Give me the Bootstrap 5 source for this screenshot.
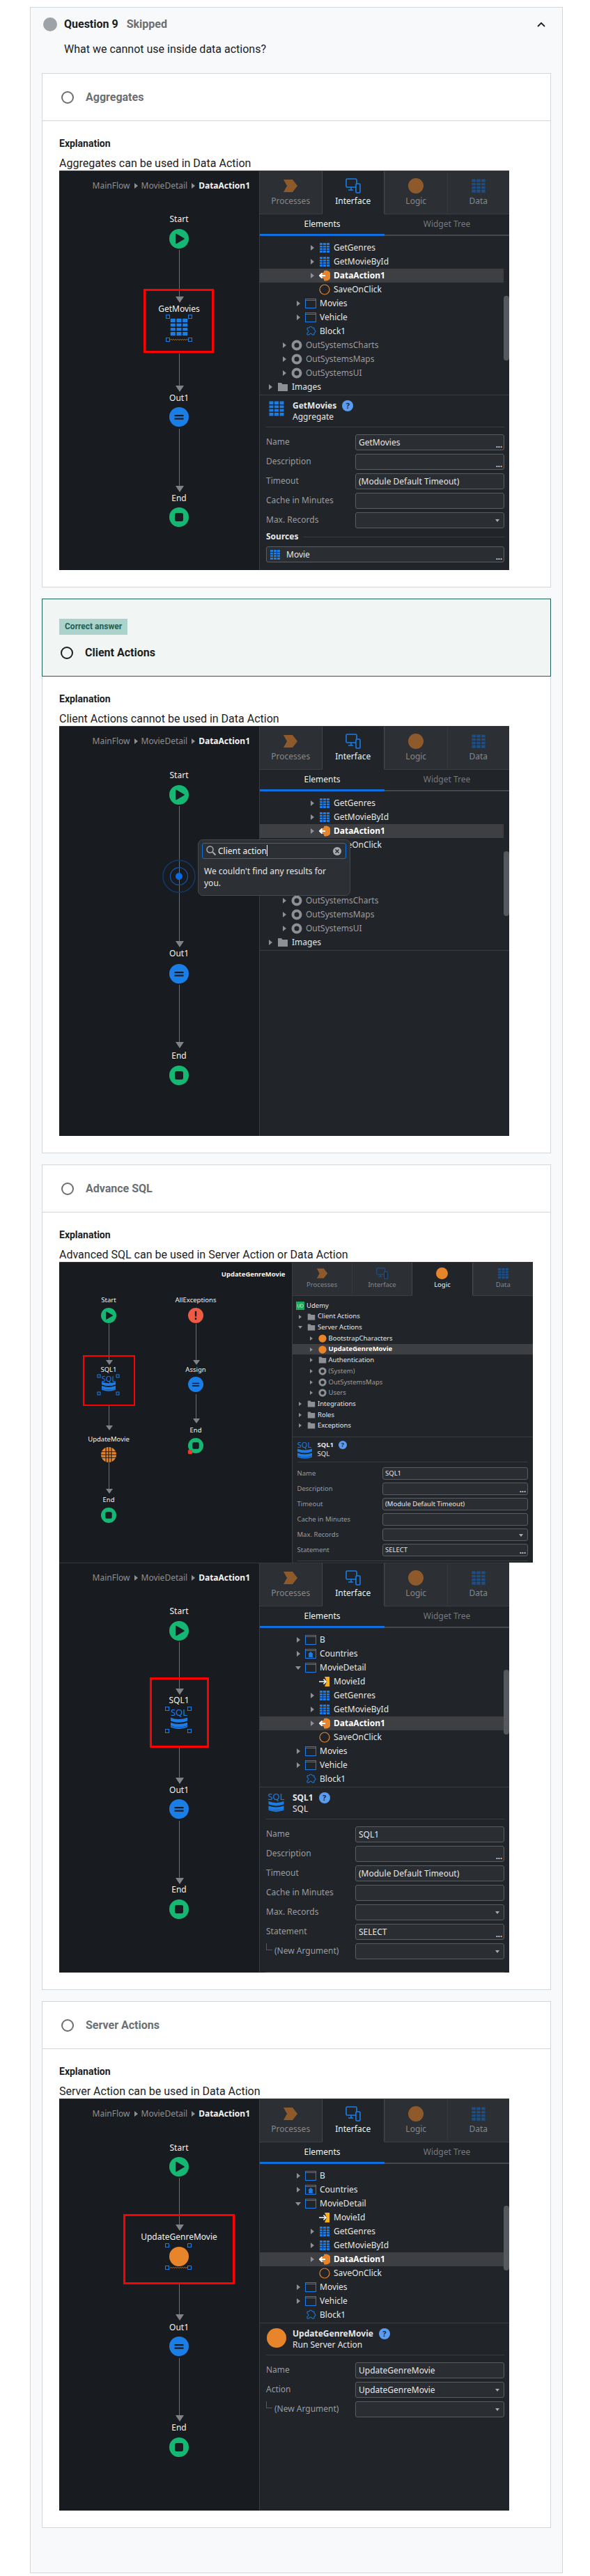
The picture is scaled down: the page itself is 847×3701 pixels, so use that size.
<!DOCTYPE html>
<html lang="en">
<head>
    <meta charset="UTF-8">
    <meta name="viewport" content="width=device-width, initial-scale=1.0">
    <title>Question 9</title>
    <link href="https://cdn.jsdelivr.net/npm/bootstrap@5.3.0/dist/css/bootstrap.min.css" rel="stylesheet">
    <style>
        body { background: #fff; color: #1c1d1f; font-family: Roboto, "Liberation Sans", sans-serif; font-size: 16px; margin: 0; }
        .quiz-panel { margin: 10px 39px 0 43px; background: #f7f9fa; border: 1px solid #d1d7dc; padding: 14px 16px 64px; }
        .quiz-dot { width: 20px; height: 20px; border-radius: 50%; background: #9da3a7; margin: 0 10px 0 2px; }
        .quiz-head { height: 20px; line-height: 20px; font-weight: 700; }
        .quiz-skip { color: #6a6f73; margin-left: 12px; }
        .quiz-text { margin: 14px 0 22px 32px; line-height: 24px; }
        .quiz-answer { background: #fff; border: 1px solid #d1d7dc; margin-bottom: 16px; }
        .quiz-title { height: 68px; padding: 0 24px 0 25px; font-weight: 700; color: #6a6f73; border-bottom: 1px solid #d1d7dc; }
        .quiz-radio { width: 18px; height: 18px; border: 2px solid #6a6f73; border-radius: 50%; margin: 0 17px 0 2px; flex: none; }
        .quiz-correct .quiz-title { height: auto; display: block !important; padding: 26px 24px 21px; background: #f1f5f3; color: #1c1d1f; border: 1px solid #1e6055; margin: -1px -1px 0; }
        .quiz-correct .quiz-radio { border-color: #1c1d1f; }
        .quiz-badge { display: inline-block; height: 23px; line-height: 23px; padding: 0 8px; background: #acd2cc; color: #1e6055; font-size: 12px; font-weight: 700; margin-bottom: 14px; }
        .quiz-body { padding: 22px 24px 24px; }
        .quiz-expl { font-size: 14px; font-weight: 700; line-height: 21px; margin-bottom: 8px; }
        .quiz-note { line-height: 20px; }

        .ide { --row: 20px; --fs: 12px; --tabh: 63px; --tab-icon: 22px; --cw: 288px; position: relative; width: 646px; display: flex; background: #181b20; font-family: "Noto Sans", "Liberation Sans", sans-serif; font-size: var(--fs); color: #e6e7e8; overflow: hidden; }
        .ide::before { content: ""; position: absolute; left: 0; right: 0; top: 0; height: 1px; background: #34373b; z-index: 4; }
        .ide-sm { --row: 15.7px; --fs: 9.5px; --tabh: 49px; --tab-icon: 17px; --cw: 334.5px; width: 680px; }
        .ide-canvas { position: relative; width: var(--cw); flex: none; background: #181b20; border-right: 1px solid #3a3d41; }
        .ide-crumb { height: 42px; padding: 13px 13px 0 0; line-height: 18px; color: #8d9094; }
        .ide-crumb b { color: #f2f2f2; }
        .ide-sm .ide-crumb { padding: 9px 9px 0 0; }
        .ide-sep { width: 0; height: 0; border-left: 5px solid #8d9094; border-top: 4px solid transparent; border-bottom: 4px solid transparent; margin: 5px 5px 0 6px; }
        .ide-panel { flex: 1 1 0; min-width: 0; background: #212428; display: flex; flex-direction: column; }
        .ide-tab { flex: 1 1 0; height: var(--tabh); background: #2c2f33; border-bottom: 1px solid #3a3d41; border-left: 1px solid #34373b; color: #85888c; text-align: center; }
        .ide-tab:first-child { border-left: 0; }
        .ide-tab svg { display: block; width: var(--tab-icon); height: var(--tab-icon); margin: 11px auto 2px; }
        .ide-sm .ide-tab svg { margin: 8px auto 1px; }
        .ide-tab-on { background: #212428; color: #f2f2f2; border-bottom-color: #212428; border-left: 1px solid #45484c; border-right: 1px solid #45484c; }
        .ide-sub { height: 31px; line-height: 28px; text-align: center; color: #77797d; border-bottom: 2px solid #45484c; }
        .ide-sub > div { flex: 1 1 0; height: 31px; }
        .ide-sub-on { color: #f2f2f2; border-bottom: 3px solid #0d6fe0; }
        .ide-tree { position: relative; height: 229px; padding-top: 7px; flex: none; border-bottom: 1px solid #3a3d41; }
        .ide-sm .ide-tree { height: 203px; padding-top: 6px; }
        .ide-line { height: var(--row); padding-right: 8px; white-space: nowrap; margin-right: 8px; }
        .ide-sm .ide-line { margin-right: 0; }
        .ide-line-on { background: #3d3f43; font-weight: 700; color: #fff; }
        .ide-dim { color: #9a9da0; }
        .ide-arrow { width: 8px; margin-right: 6px; flex: none; display: flex; justify-content: center; }
        .ide-sm .ide-arrow { width: 6px; margin-right: 7px; }
        .ide-arrow i { display: block; width: 0; height: 0; }
        .ide-ar { border-left: 5px solid #8d9094; border-top: 4px solid transparent; border-bottom: 4px solid transparent; }
        .ide-ad { border-top: 5px solid #8d9094; border-left: 4px solid transparent; border-right: 4px solid transparent; }
        .ide-sm .ide-ar { border-left-width: 4px; border-top-width: 3px; border-bottom-width: 3px; }
        .ide-sm .ide-ad { border-top-width: 4px; border-left-width: 3px; border-right-width: 3px; }
        .ide-ico { width: 16px; height: 16px; margin-right: 5px; flex: none; color: #1a7ee6; }
        .ide-sm .ide-ico { width: 12px; height: 12px; margin-right: 3px; }
        .ide-scroll { position: absolute; right: 0; width: 8px; background: #55585c; border-radius: 4px; }
        .ide-detail { padding: 0 7px 0 9px; }
        .ide-sm .ide-detail { padding: 0 7px; }
        .ide-hdr { height: 46px; padding-top: 7px; line-height: 16px; border-bottom: 1px solid #3a3d41; }
        .ide-sm .ide-hdr { height: 36px; padding-top: 5px; line-height: 12.6px; }
        .ide-hdr-ico { width: 29px; margin-right: 9px; flex: none; color: #1a7ee6; text-align: center; }
        .ide-sm .ide-hdr-ico { width: 21px; margin-right: 8px; }
        .ide-hdr-sql { font-size: 13px; line-height: 13px; display: block; }
        .ide-sm .ide-hdr-sql { font-size: 11px; line-height: 11px; }
        .ide-help { display: inline-block; width: 16px; height: 16px; line-height: 16px; border-radius: 50%; background: #5b9bf0; color: #1d2a3d; font-size: 11px; font-weight: 700; text-align: center; margin-left: 8px; }
        .ide-sm .ide-help { width: 12px; height: 12px; line-height: 12px; font-size: 9px; margin-left: 7px; }
        .ide-form { padding-top: 7px; }
        .ide-sm .ide-form { padding-top: 5px; }
        .ide-field { display: grid; grid-template-columns: 128px 1fr; height: 28px; align-items: center; color: #9a9da0; }
        .ide-sm .ide-field { grid-template-columns: 122.5px 1fr; height: 22px; }
        .ide-input { position: relative; height: 23px; line-height: 21px; padding-left: 4px; background: #2a2d31; border: 1px solid #5a5d61; border-radius: 3px; color: #e6e7e8; white-space: nowrap; }
        .ide-sm .ide-input { height: 18px; line-height: 16px; padding-left: 3px; }
        .ide-dots { position: absolute; right: 2px; bottom: 1px; line-height: 12px; font-size: 11px; font-weight: 700; }
        .ide-caret { position: absolute; right: 6px; top: 9px; width: 0; height: 0; border-top: 4px solid #a9abae; border-left: 3px solid transparent; border-right: 3px solid transparent; }
        .ide-sm .ide-caret { top: 7px; }
        .ide-arg { padding-left: 12px; position: relative; }
        .ide-arg::before { content: ""; position: absolute; left: 0; top: -2px; width: 9px; height: 10px; border-left: 1px solid #55585c; border-bottom: 1px solid #55585c; }
        .ide-sources { height: 20px; line-height: 20px; font-weight: 700; color: #e6e7e8; }
        .ide-sources::after { content: ""; flex: 1; height: 1px; background: #3a3d41; margin-left: 8px; }
        .ide-end { border-bottom: 1px solid #3a3d41; }

        .node-label { position: absolute; transform: translate(-50%, -50%); line-height: 16px; color: #f2f2f2; white-space: nowrap; }
        .node-wire { position: absolute; width: 1px; background: #6d7073; }
        .node-head { position: absolute; width: 0; height: 0; border-top: 9px solid #808285; border-left: 6.5px solid transparent; border-right: 6.5px solid transparent; transform: translateX(-50%); }
        .ide-sm .node-head { border-top-width: 7px; border-left-width: 5px; border-right-width: 5px; }
        .node-pic { position: absolute; transform: translate(-50%, -50%); display: block; color: #1a7ee6; }
        .node-pick { position: absolute; border: 3px solid #f00; }
        .ide-sm .node-pick { border-width: 2px; }
        .node-sql { position: absolute; transform: translate(-50%, -50%); color: #1a7ee6; line-height: 14px; font-size: 13px; }
        .ide-sm .node-sql { font-size: 11px; }
        .node-dot { position: absolute; width: 6px; height: 6px; background: #181b20; border: 1px solid #1a7ee6; transform: translate(-50%, -50%); }
        .ide-sm .node-dot { width: 5px; height: 5px; }

        .find-pop { position: absolute; left: 199px; top: 163px; width: 219px; height: 81px; background: #2c3034; border: 1px solid #45484c; border-radius: 7px; padding: 4px 5px; z-index: 3; }
        .find-box { height: 23px; border: 1px solid #0d6fe0; border-radius: 3px; padding-left: 22px; line-height: 21px; position: relative; color: #f2f2f2; }
        .find-box svg { position: absolute; }
        .find-cur { display: inline-block; width: 1px; height: 16px; background: #fff; vertical-align: -3px; }
        .find-msg { padding: 9px 3px 0 3px; line-height: 17px; color: #e6e7e8; }
    </style>
</head>
<body>
    <svg width="0" height="0" class="position-absolute">
        <symbol id="i-proc" viewBox="0 0 22 22"><polygon points="1,2 14,2 21,11 14,20 1,20 6,11" fill="currentColor"/></symbol>
        <symbol id="i-iface" viewBox="0 0 22 22" fill="none" stroke="currentColor" stroke-width="1.6"><rect x="1" y="1" width="15" height="12" rx="1.5"/><path d="M4 17h7M8 13v4"/><rect x="15" y="8" width="6" height="13" rx="1.2" fill="#212428"/></symbol>
        <symbol id="i-logic" viewBox="0 0 22 22"><circle cx="11" cy="11" r="11" fill="currentColor"/></symbol>
        <symbol id="i-grid" viewBox="0 0 16 16"><path fill="currentColor" d="M1 1h4v3H1zM6 1h4v3H6zM11 1h4v3h-4zM1 5h4v2.500H1zM6 5h4v2.500H6zM11 5h4v2.500h-4zM1 8.500h4V11H1zM6 8.500h4V11H6zM11 8.500h4V11h-4zM1 12h4v3H1zM6 12h4v3H6zM11 12h4v3h-4z"/></symbol>
        <symbol id="i-act" viewBox="0 0 16 16"><path d="M7 1a7.500 7.500 0 1 1 0 14z" fill="#e8842a"/><circle cx="8" cy="8" r="5" fill="#e8842a"/><path d="M1 8h8M4.500 4.500 1 8l3.500 3.500" stroke="#fff" stroke-width="2" fill="none"/></symbol>
        <symbol id="i-ring" viewBox="0 0 16 16"><circle cx="8" cy="8" r="7" fill="none" stroke="#e8842a" stroke-width="1.200"/></symbol>
        <symbol id="i-orange" viewBox="0 0 16 16"><circle cx="8" cy="8" r="7.500" fill="#e8842a"/></symbol>
        <symbol id="i-screen" viewBox="0 0 16 16" fill="none" stroke="#1a7ee6" stroke-width="1"><rect x=".500" y="1.500" width="15" height="13"/><path d="M.500 3.500h15"/></symbol>
        <symbol id="i-home" viewBox="0 0 16 16"><rect x=".500" y="1.500" width="15" height="13" fill="none" stroke="#1a7ee6"/><path d="M.500 3.500h15" stroke="#1a7ee6"/><path d="M8 5l4 3.500h-1.200V13H5.200V8.500H4z" fill="#1a7ee6"/></symbol>
        <symbol id="i-block" viewBox="0 0 16 16"><path d="M3 3h3a2 2 0 0 1 4 0h3v3a2 2 0 0 1 0 4v3h-3a2 2 0 0 0-4 0H3v-3a2 2 0 0 0 0-4z" fill="none" stroke="#1a7ee6"/></symbol>
        <symbol id="i-mod" viewBox="0 0 16 16"><circle cx="8" cy="8" r="5.500" fill="none" stroke="#8d9094" stroke-width="4"/></symbol>
        <symbol id="i-folder" viewBox="0 0 16 16"><path d="M1 2h5l1.500 2H15v10H1z" fill="#8d9094"/></symbol>
        <symbol id="i-input" viewBox="0 0 16 16"><path d="M8 1h7v14H8l3-7z" fill="#f5b01c"/><path d="M0 8h10M6.500 4.500 10 8l-3.500 3.500" stroke="#fff" stroke-width="1.600" fill="none"/></symbol>
        <symbol id="i-ud" viewBox="0 0 16 16"><rect width="16" height="16" fill="#1faa59"/><path d="M3 5v4a2 2 0 0 0 4 0V5M9 5v6h2a3 3 0 0 0 0-6z" fill="none" stroke="#bff0d2"/></symbol>
        <symbol id="n-start" viewBox="0 0 28 28"><circle cx="14" cy="14" r="14" fill="#14b873"/><path d="M10 7.500 21 14l-11 6.500z" fill="#181b20" stroke="#181b20" stroke-width="1.500" stroke-linejoin="round"/></symbol>
        <symbol id="n-end" viewBox="0 0 28 28"><circle cx="14" cy="14" r="14" fill="#14b873"/><rect x="8" y="8" width="12" height="12" rx="2.500" fill="#181b20"/></symbol>
        <symbol id="n-assign" viewBox="0 0 28 28"><circle cx="14" cy="14" r="14" fill="#1a7ee6"/><path d="M7.500 11h13v2.200h-13zM7.500 15.500h13v2.200h-13z" fill="#181b20"/></symbol>
        <symbol id="n-error" viewBox="0 0 28 28"><circle cx="14" cy="14" r="14" fill="#ee5a44"/><path d="M12.500 6h3v10h-3zM12.500 18h3v3.500h-3z" fill="#181b20"/></symbol>
        <symbol id="n-web" viewBox="0 0 28 28"><circle cx="14" cy="14" r="14" fill="#e8842a"/><path d="M0 8.500h28M0 14h28M0 19.500h28M9 0v28M14 0v28M19 0v28" stroke="#181b20" stroke-width="1.400"/></symbol>
        <symbol id="n-orange" viewBox="0 0 28 28"><circle cx="14" cy="14" r="14" fill="#e8842a"/></symbol>
        <symbol id="n-red" viewBox="0 0 8 8"><circle cx="4" cy="4" r="4" fill="#ee3a2c"/></symbol>
        <symbol id="n-db" viewBox="0 0 26 20"><path fill="#1a7ee6" d="M0 0q13 5 26 0v5q-13 5-26 0zM0 7.500q13 5 26 0v5q-13 5-26 0zM0 13q13 5 26 0v2q-13 5-26 0z"/></symbol>
        <symbol id="n-squig" viewBox="0 0 32 4"><path d="M0 3l2-2 2 2 2-2 2 2 2-2 2 2 2-2 2 2 2-2 2 2 2-2 2 2 2-2 2 2 2-2 2 2" fill="none" stroke="#d88a22"/></symbol>
        <symbol id="n-target" viewBox="0 0 48 48"><circle cx="24" cy="24" r="23" fill="none" stroke="#123a6b" stroke-width="1.500"/><circle cx="24" cy="24" r="12.500" fill="none" stroke="#1259b0" stroke-width="1.200"/><circle cx="24" cy="24" r="5" fill="#0a6be0"/></symbol>
    </svg>

    <div class="quiz-panel">
        <div class="d-flex align-items-center quiz-head">
            <span class="quiz-dot"></span>
            <span>Question 9</span>
            <span class="quiz-skip">Skipped</span>
            <svg class="ms-auto me-2" width="12" height="8" viewBox="0 0 12 8"><path d="M1 7l5-5 5 5" fill="none" stroke="#1c1d1f" stroke-width="1.800"/></svg>
        </div>
        <div class="quiz-text">What we cannot use inside data actions?</div>

        <div class="quiz-answer">
            <div class="quiz-title d-flex align-items-center"><span class="quiz-radio"></span>Aggregates</div>
            <div class="quiz-body">
                <div class="quiz-expl">Explanation</div>
                <div class="quiz-note">Aggregates can be used in Data Action</div>
                <div id="shot1"></div>
            </div>
        </div>

        <div class="quiz-answer quiz-correct">
            <div class="quiz-title">
                <div><span class="quiz-badge">Correct answer</span></div>
                <div class="d-flex align-items-center"><span class="quiz-radio"></span>Client Actions</div>
            </div>
            <div class="quiz-body">
                <div class="quiz-expl">Explanation</div>
                <div class="quiz-note">Client Actions cannot be used in Data Action</div>
                <div id="shot2"></div>
            </div>
        </div>

        <div class="quiz-answer">
            <div class="quiz-title d-flex align-items-center"><span class="quiz-radio"></span>Advance SQL</div>
            <div class="quiz-body">
                <div class="quiz-expl">Explanation</div>
                <div class="quiz-note">Advanced SQL can be used in Server Action or Data Action</div>
                <div id="shot3"></div>
                <div id="shot4"></div>
            </div>
        </div>

        <div class="quiz-answer mb-0">
            <div class="quiz-title d-flex align-items-center"><span class="quiz-radio"></span>Server Actions</div>
            <div class="quiz-body">
                <div class="quiz-expl">Explanation</div>
                <div class="quiz-note">Server Action can be used in Data Action</div>
                <div id="shot5"></div>
            </div>
        </div>
    </div>

    <script>
        const use = (id, cls, style) => `<svg class="${cls || ''}" ${style ? `style="${style}"` : ''}><use href="#${id}"/></svg>`;

        // tree rows: [level, arrow, icon, text, extra class]
        const treeShort = [
            [3, 'r', 'grid', 'GetGenres'], [3, 'r', 'grid', 'GetMovieById'], [3, 'r', 'act', 'DataAction1', 'on'], [3, '', 'ring', 'SaveOnClick'],
            [2, 'r', 'screen', 'Movies'], [2, 'r', 'screen', 'Vehicle'], [2, '', 'block', 'Block1'],
            [1, 'r', 'mod', 'OutSystemsCharts', 'dim'], [1, 'r', 'mod', 'OutSystemsMaps', 'dim'], [1, 'r', 'mod', 'OutSystemsUI', 'dim'],
            [0, 'r', 'folder', 'Images']
        ];
        const treeDetail = [
            [2, 'r', 'screen', 'B'], [2, 'r', 'home', 'Countries'], [2, 'd', 'screen', 'MovieDetail'],
            [3, '', 'input', 'MovieId'], [3, 'r', 'grid', 'GetGenres'], [3, 'r', 'grid', 'GetMovieById'], [3, 'r', 'act', 'DataAction1', 'on'], [3, '', 'ring', 'SaveOnClick'],
            [2, 'r', 'screen', 'Movies'], [2, 'r', 'screen', 'Vehicle'], [2, '', 'block', 'Block1']
        ];
        const treeLogic = [
            [0, 'root', 'ud', 'Udemy'],
            [1, 'r', 'folder', 'Client Actions'], [1, 'd', 'folder', 'Server Actions'],
            [2, 'r', 'orange', 'BootstrapCharacters'], [2, 'r', 'orange', 'UpdateGenreMovie', 'on'], [2, 'r', 'folder', 'Authentication'],
            [2, 'r', 'mod', '(System)', 'dim'], [2, 'r', 'mod', 'OutSystemsMaps', 'dim'], [2, 'r', 'mod', 'Users', 'dim'],
            [1, 'r', 'folder', 'Integrations'], [1, 'r', 'folder', 'Roles'], [1, 'r', 'folder', 'Exceptions']
        ];

        function treeRow(r, small) {
            const [level, arrow, icon, text, extra] = r;
            const pad = arrow === 'root' ? 5.5 : small ? -7 + 15.5 * level : 11 + 20 * level;
            const arrowHtml = arrow === 'root' ? '' : `<span class="ide-arrow"><i class="${arrow ? 'ide-a' + arrow : ''}"></i></span>`;
            const cls = extra === 'on' ? 'ide-line-on' : extra === 'dim' ? 'ide-dim' : '';
            return `<div class="ide-line d-flex align-items-center ${cls}" style="padding-left:${pad}px">${arrowHtml}${use('i-' + icon, 'ide-ico')}<span>${text}</span></div>`;
        }

        function tabs(active) {
            const list = [['Processes', 'i-proc', '#e8842a', '#8f5a2b'], ['Interface', 'i-iface', '#1a7ee6', '#1c4f85'], ['Logic', 'i-logic', '#e8842a', '#8f5a2b'], ['Data', 'i-grid', '#1a7ee6', '#1c4f85']];
            return '<div class="d-flex">' + list.map(t => {
                const on = t[0] === active;
                return `<div class="ide-tab ${on ? 'ide-tab-on' : ''}">${use(t[1], '', 'color:' + (on ? t[2] : t[3]))}${t[0]}</div>`;
            }).join('') + '</div>';
        }

        function field(f) {
            const [label, value, tail, arg] = f;
            const end = tail === 'dots' ? '<span class="ide-dots">...</span>' : tail === 'caret' ? '<span class="ide-caret"></span>' : '';
            return `<div class="ide-field"><span class="${arg ? 'ide-arg' : ''}">${label}</span><div class="ide-input">${value}${end}</div></div>`;
        }

        // flow canvas: nodes sit at their own coordinates
        function canvas(s) {
            let h = `<div class="ide-crumb d-flex justify-content-end">${s.crumb}</div>`;
            (s.wires || []).forEach(w => { h += `<div class="node-wire" style="left:${w[0]}px;top:${w[1]}px;height:${w[2] - w[1]}px"></div><div class="node-head" style="left:${w[0] + .5}px;top:${w[2]}px"></div>`; });
            (s.labels || []).forEach(l => { h += `<span class="node-label" style="left:${l[0]}px;top:${l[1]}px">${l[2]}</span>`; });
            (s.pics || []).forEach(p => { h += use(p[0], 'node-pic', `left:${p[1]}px;top:${p[2]}px;width:${p[3]}px;height:${p[4] || p[3]}px`); });
            (s.dots || []).forEach(d => { h += `<span class="node-dot" style="left:${d[0]}px;top:${d[1]}px"></span>`; });
            (s.sql || []).forEach(q => { h += `<span class="node-sql" style="left:${q[0]}px;top:${q[1]}px">SQL</span>`; });
            if (s.pick) { const p = s.pick; h += `<div class="node-pick" style="left:${p[0]}px;top:${p[1]}px;width:${p[2]}px;height:${p[3]}px"></div>`; }
            return `<div class="ide-canvas" style="height:${s.h}px">${h}${s.over || ''}</div>`;
        }

        function shot(id, s) {
            const sub = s.small ? '' : '<div class="ide-sub d-flex"><div class="ide-sub-on">Elements</div><div>Widget Tree</div></div>';
            const rows = s.tree.map(r => treeRow(r, s.small)).join('');
            const bar = s.bar ? `<div class="ide-scroll" style="top:${s.bar[0]}px;height:${s.bar[1]}px"></div>` : '';
            document.getElementById(id).innerHTML =
                `<div class="ide ${s.small ? 'ide-sm' : ''}">${canvas(s)}<div class="ide-panel">${tabs(s.tab)}${sub}<div class="ide-tree">${rows}${bar}</div>${s.detail || ''}</div></div>`;
        }

        const crumb = 'MainFlow<span class="ide-sep"></span>MovieDetail<span class="ide-sep"></span><b>DataAction1</b>';
        const help = '<span class="ide-help">?</span>';
        const gridIcon = '<svg width="28" height="24"><use href="#i-grid"/></svg>';
        const sqlIcon = '<span class="ide-hdr-sql">SQL</span><svg width="100%" height="17"><use href="#n-db"/></svg>';
        const orangeIcon = '<svg width="28" height="28"><use href="#n-orange"/></svg>';
        const head = (icon, title, kind) => `<div class="ide-hdr d-flex"><div class="ide-hdr-ico">${icon}</div><div><b>${title}</b>${help}<br>${kind}</div></div>`;

        shot('shot1', {
            h: 574, crumb, tab: 'Interface', tree: treeShort, bar: [86, 93],
            wires: [[172, 114, 181], [172, 263, 309], [172, 371, 453]],
            labels: [[172, 70, 'Start'], [172, 199, 'GetMovies'], [172, 327, 'Out1'], [172, 471, 'End']],
            pics: [['n-start', 172, 98, 28], ['i-grid', 172, 225, 32, 28], ['n-assign', 172, 354, 28], ['n-end', 172, 498, 28], ['n-squig', 172, 243, 26, 4]],
            dots: [[156, 210], [188, 210], [156, 243], [188, 243]],
            pick: [121, 170, 101, 92],
            detail: `<div class="ide-detail">${head(gridIcon, 'GetMovies', 'Aggregate')}<div class="ide-form">${[['Name', 'GetMovies', 'dots'], ['Description', '', 'dots'], ['Timeout', '(Module Default Timeout)'], ['Cache in Minutes', ''], ['Max. Records', '', 'caret']].map(field).join('')}
                <div class="ide-sources d-flex align-items-center">Sources</div>
                <div class="ide-input mt-1 d-flex align-items-center ide-dim"><svg width="16" height="16" class="me-2"><use href="#i-grid" style="color:#1a7ee6"/></svg>Movie<span class="ide-dots">...</span></div></div></div>`
        });

        // Movies, Vehicle and Block1 lie under the search popover in this picture
        const treeCovered = treeShort.map((r, i) => (i >= 4 && i <= 6) ? [r[0], '', 'none', ''] : r);

        shot('shot2', {
            h: 589, crumb, tab: 'Interface', tree: treeCovered, bar: [86, 93],
            wires: [[172, 115, 309], [172, 372, 454]],
            labels: [[172, 71, 'Start'], [172, 327, 'Out1'], [172, 474, 'End']],
            pics: [['n-start', 172, 99, 28], ['n-target', 172, 216, 48], ['n-assign', 172, 356, 28], ['n-end', 172, 502, 28]],
            over: `<div class="find-pop"><div class="find-box"><svg width="14" height="14" style="left:5px;top:3px"><circle cx="5.500" cy="5.500" r="4.500" fill="none" stroke="#a9abae" stroke-width="1.500"/><path d="M9 9l4.500 4.500" stroke="#a9abae" stroke-width="2"/></svg>Client action<span class="find-cur"></span><svg width="12" height="12" style="right:6px;top:5px"><circle cx="6" cy="6" r="6" fill="#a9abae"/><path d="M3.500 3.500l5 5M8.500 3.500l-5 5" stroke="#2c3034" stroke-width="1.600"/></svg></div><div class="find-msg">We couldn't find any results for you.</div></div>`
        });

        shot('shot3', {
            small: true, h: 432, crumb: '<b>UpdateGenreMovie</b>', tab: 'Logic', tree: treeLogic,
            wires: [[71, 89, 141], [71, 207, 235], [71, 288, 326], [196, 89, 141], [196, 190, 225]],
            labels: [[71, 55, 'Start'], [71, 155, 'SQL1'], [71, 255, 'UpdateMovie'], [71, 342, 'End'], [196, 55, 'AllExceptions'], [196, 155, 'Assign'], [196, 242, 'End']],
            pics: [['n-start', 71, 77, 22], ['n-db', 71, 180, 20, 16], ['n-web', 71, 277, 22], ['n-end', 71, 364, 22], ['n-error', 196, 77, 22], ['n-assign', 196, 176, 22], ['n-end', 196, 264, 22], ['n-red', 188, 273, 7]],
            dots: [[57, 164], [84, 164], [57, 189], [84, 189]],
            sql: [[71, 168]],
            pick: [34, 134, 75, 73],
            detail: `<div class="ide-detail">${head(sqlIcon, 'SQL1', 'SQL')}<div class="ide-form ide-end pb-1">${[['Name', 'SQL1'], ['Description', '', 'dots'], ['Timeout', '(Module Default Timeout)'], ['Cache in Minutes', ''], ['Max. Records', '', 'caret'], ['Statement', 'SELECT', 'dots']].map(field).join('')}</div></div>`
        });

        shot('shot4', {
            h: 588, crumb, tab: 'Interface', tree: treeDetail, bar: [60, 93],
            wires: [[172, 114, 181], [172, 263, 309], [172, 371, 453]],
            labels: [[172, 70, 'Start'], [172, 198, 'SQL1'], [172, 327, 'Out1'], [172, 470, 'End']],
            pics: [['n-start', 172, 98, 28], ['n-db', 172, 232, 24, 20], ['n-assign', 172, 354, 28], ['n-end', 172, 498, 28]],
            dots: [[155, 210], [187, 210], [155, 242], [187, 242]],
            sql: [[172, 215]],
            pick: [130, 165, 85, 101],
            detail: `<div class="ide-detail">${head(sqlIcon, 'SQL1', 'SQL')}<div class="ide-form ide-end pb-3">${[['Name', 'SQL1'], ['Description', '', 'dots'], ['Timeout', '(Module Default Timeout)'], ['Cache in Minutes', ''], ['Max. Records', '', 'caret'], ['Statement', 'SELECT', 'dots'], ['(New Argument)', '', 'caret', true]].map(field).join('')}</div></div>`
        });

        shot('shot5', {
            h: 592, crumb, tab: 'Interface', tree: treeDetail, bar: [60, 93],
            wires: [[172, 114, 181], [172, 267, 310], [172, 373, 455]],
            labels: [[172, 71, 'Start'], [172, 199, 'UpdateGenreMovie'], [172, 329, 'Out1'], [172, 473, 'End']],
            pics: [['n-start', 172, 98, 28], ['n-orange', 172, 227, 28], ['n-assign', 172, 356, 28], ['n-end', 172, 501, 28], ['n-squig', 172, 243, 26, 4]],
            dots: [[155, 211], [187, 211], [155, 243], [187, 243]],
            pick: [92, 166, 160, 101],
            detail: `<div class="ide-detail">${head(orangeIcon, 'UpdateGenreMovie', 'Run Server Action')}<div class="ide-form">${[['Name', 'UpdateGenreMovie'], ['Action', 'UpdateGenreMovie', 'caret'], ['(New Argument)', '', 'caret', true]].map(field).join('')}</div></div>`
        });
    </script>
    <script src="https://cdn.jsdelivr.net/npm/bootstrap@5.3.0/dist/js/bootstrap.bundle.min.js"></script>
</body>
</html>
